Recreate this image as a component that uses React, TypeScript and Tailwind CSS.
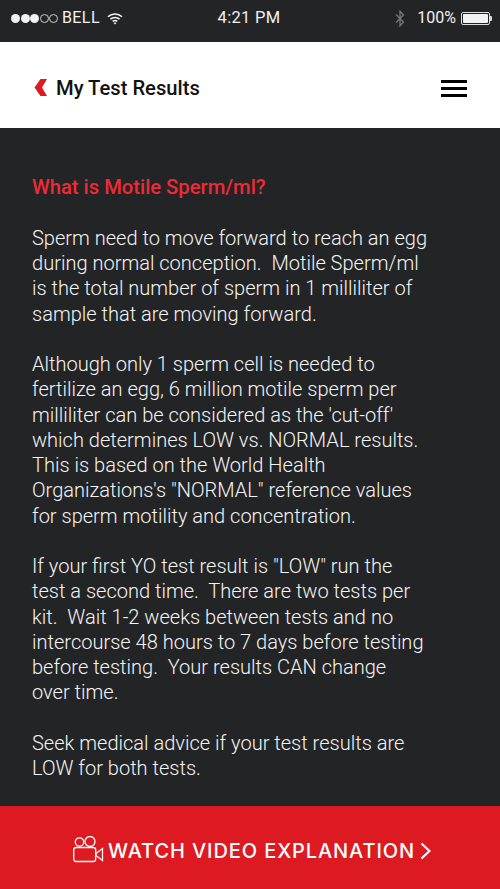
const paragraphs = [
  `Sperm need to move forward to reach an egg
during normal conception.  Motile Sperm/ml
is the total number of sperm in 1 milliliter of
sample that are moving forward.`,
  `Although only 1 sperm cell is needed to
fertilize an egg, 6 million motile sperm per
milliliter can be considered as the 'cut-off'
which determines LOW vs. NORMAL results.
This is based on the World Health
Organizations's "NORMAL" reference values
for sperm motility and concentration.`,
  `If your first YO test result is "LOW" run the
test a second time.  There are two tests per
kit.  Wait 1-2 weeks between tests and no
intercourse 48 hours to 7 days before testing
before testing.  Your results CAN change
over time.`,
  `Seek medical advice if your test results are
LOW for both tests.`,
];

function StatusBar() {
  return (
    <div className="flex h-[42px] shrink-0 items-center justify-between bg-[#232426] pb-[6px] pl-[11px] pr-[8px] font-['Roboto',sans-serif] text-[#f0f0f0]">
      <div className="flex w-[150px] items-center">
        <div className="flex items-center gap-[0.5px]">
          <span className="h-[9px] w-[9px] rounded-full bg-[#f2f2f2]" />
          <span className="h-[9px] w-[9px] rounded-full bg-[#f2f2f2]" />
          <span className="h-[9px] w-[9px] rounded-full bg-[#f2f2f2]" />
          <span className="h-[9px] w-[9px] rounded-full border border-[#cccccc]" />
          <span className="h-[9px] w-[9px] rounded-full border border-[#cccccc]" />
        </div>
        <span className="ml-[4px] text-[16px] tracking-[0.4px]">BELL</span>
        <svg className="ml-[7px]" width="16" height="13" viewBox="0 0 17 13" fill="none" stroke="#f2f2f2" strokeWidth="1.6">
          <path d="M1 4.600C5.200.6 11.800.6 16 4.600" />
          <path d="M3.600 7.200c2.700-2.500 7.100-2.500 9.800 0" />
          <path d="M6 9.600c1.400-1.200 3.600-1.200 5 0" />
          <path d="M8.500 13 7 11.300c.8-.6 2.200-.6 3 0z" fill="#f2f2f2" stroke="none" />
        </svg>
      </div>
      <span className="ml-[-5px] text-[16.500px] tracking-[0.3px]">4:21 PM</span>
      <div className="flex w-[150px] items-center justify-end">
        <svg width="10" height="17" viewBox="0 0 10 17" fill="none" stroke="#77787a" strokeWidth="1.3">
          <path d="M1 4.500 8.500 12 5 15.800V1.200L8.500 5 1 12.500" />
        </svg>
        <span className="ml-[12px] text-[16px]">100%</span>
        <div className="ml-[5px] flex items-center">
          <div className="h-[13px] w-[29px] rounded-[2px] border border-[#dddddd] p-[1px]">
            <div className="h-full w-full rounded-[1px] bg-[#f2f2f2]" />
          </div>
          <div className="h-[5px] w-[2px] rounded-r-[1px] bg-[#dddddd]" />
        </div>
      </div>
    </div>
  );
}

function Header() {
  return (
    <div className="flex h-[86px] shrink-0 items-center justify-between bg-white pl-[34px] pr-[33px] pt-[6px] font-['Roboto',sans-serif]">
      <div className="flex items-center gap-[8px]">
        <svg width="14" height="17" viewBox="0 0 14 17" fill="#dd1a22">
          <path d="M6.500 0H13L8 8.500l5 8.500H6.500L0.500 8.500z" />
        </svg>
        <span className="text-[20.200px] font-medium leading-none text-[#111111]">My Test Results</span>
      </div>
      <div className="flex w-[26px] flex-col gap-[4px]">
        <span className="h-[3px] bg-black" />
        <span className="h-[3px] bg-black" />
        <span className="h-[3px] bg-black" />
      </div>
    </div>
  );
}

export default function App() {
  return (
    <div className="flex h-[889px] w-[500px] flex-col overflow-hidden bg-[#232426]">
      <StatusBar />
      <Header />

      {/* Article */}
      <div className="min-h-0 flex-1 overflow-hidden px-[32px] pt-[47px] font-['Roboto',sans-serif] text-[20.050px] font-light leading-[25.250px] text-[#f4f4f4]">
        <h1 className="mb-[25.500px] text-[20.200px] font-medium text-[#ee2a35]">What is Motile Sperm/ml?</h1>
        {paragraphs.map((text) => (
          <p key={text} className="mb-[25.250px] whitespace-pre-wrap">
            {text}
          </p>
        ))}
      </div>

      <button className="flex h-[83px] shrink-0 items-center justify-center bg-[#dd1a22] pl-[4px] pt-[6px] font-['Inter',sans-serif] text-[20px] font-medium tracking-[0.9px] text-white">
        <svg className="mb-[3px] mr-[4px]" width="31" height="27" viewBox="0 0 31 27" fill="none" stroke="white" strokeWidth="1.3">
          <circle cx="6.500" cy="6" r="4.200" />
          <circle cx="17" cy="5.500" r="5" />
          <rect x="0.700" y="11.500" width="22" height="14" rx="2.500" />
          <path d="m23 19.500 6.500 5V12.500L23 17.500z" />
        </svg>
        WATCH VIDEO EXPLANATION
        <svg className="ml-[5px]" width="11" height="18" viewBox="0 0 11 18" fill="none" stroke="white" strokeWidth="2.200">
          <path d="m1.500 1.500 8 7.500-8 7.500" />
        </svg>
      </button>
    </div>
  );
}
